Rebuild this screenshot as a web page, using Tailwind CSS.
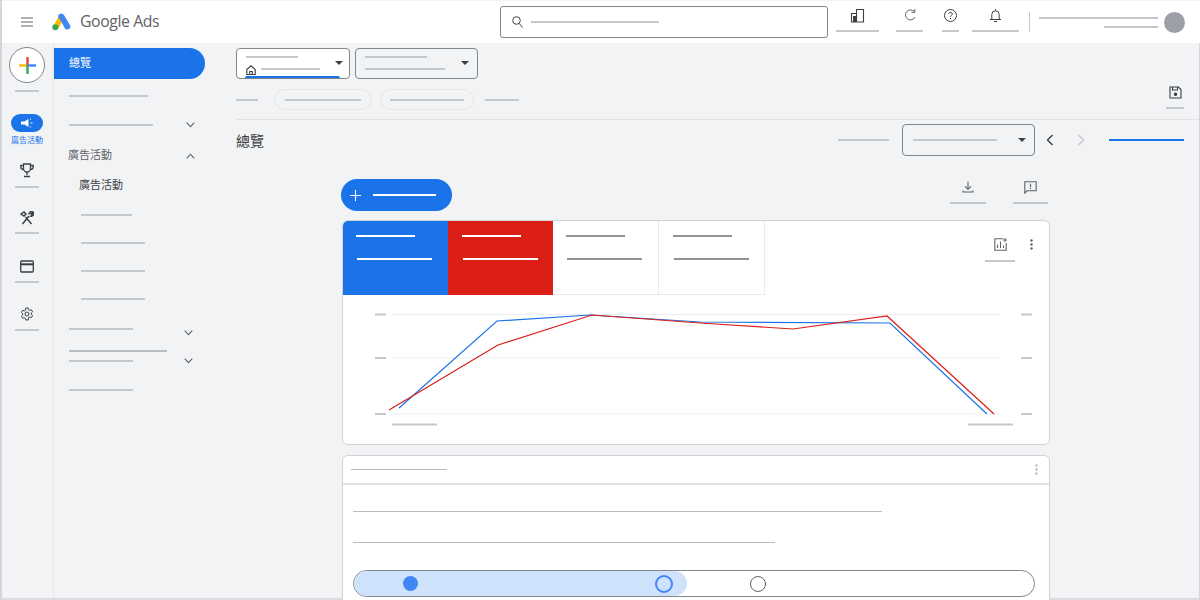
<!DOCTYPE html>
<html lang="zh-Hant">
<head>
    <meta charset="UTF-8">
    <title>Google Ads</title>
    <script src="https://cdn.jsdelivr.net/npm/@tailwindcss/browser@4"></script>
</head>
<body class="bg-[#f1f3f4] font-['Roboto','Noto_Sans_CJK_TC',sans-serif]">
<div class="relative w-[1200px] h-[600px] overflow-hidden flex flex-col">
    <!-- frame lines -->
    <div class="absolute left-0 right-0 top-[598px] h-[2px] bg-[#dadce0]"></div>
    <div class="absolute left-0 top-0 bottom-0 w-[2px] bg-[#d3d5d8] z-10"></div>
    <div class="absolute right-0 top-[43px] bottom-0 w-px bg-[#d3d5d8] z-10"></div>

    <!-- top bar -->
    <header class="h-[43px] shrink-0 bg-white border-t border-[#f1f3f4] flex items-center relative z-[1]">
        <svg class="ml-[21px] w-[12px] h-[10px]" viewBox="0 0 12 10"><path d="M0 1h12M0 5h12M0 9h12" stroke="#5f6368" stroke-width="1.1"/></svg>
        <svg class="ml-[19px] w-[20px] h-[18px]" viewBox="0 0 20 18">
            <path d="M7.4 2 1.6 12.6l5 2.6L12 5z" fill="#fbbc04"/>
            <path d="M10.6 1a3 3 0 0 0-4 1.1c-.8 1.4-.3 3.2 1.1 4l5 8.8a3 3 0 0 0 5.200-3L12 2a3 3 0 0 0-1.400-1z" fill="#4285f4"/>
            <circle cx="3.300" cy="14.300" r="3" fill="#34a853"/>
        </svg>
        <span class="ml-[8px] w-[80px] whitespace-nowrap text-[15.800px] text-[#5f6368] font-['Open_Sans',sans-serif] tracking-[-0.4px]">Google Ads</span>
        <div class="ml-[340px] w-[328px] h-[32px] rounded-[3px] border border-[#80868b] flex items-center pl-[11px]">
            <svg class="w-[11px] h-[12px]" viewBox="0 0 11 12" fill="none" stroke="#3c4043" stroke-width="1"><circle cx="4.500" cy="4.500" r="3.800"/><path d="M7.300 7.500 10.500 11.500"/></svg>
            <div class="ml-[8px] w-[128px] h-[2px] bg-[#c4c7cb]"></div>
        </div>
        <div class="ml-[8px] mb-[4px] w-[43px] flex flex-col items-center">
            <svg class="w-[15px] h-[15px]" viewBox="0 0 15 15" fill="none" stroke="#3c4043" stroke-width="1.100"><path d="M6.500 14V1.500h7V14zM1.500 14V5.500h5V14z"/><path d="M3 14V8h3.500v6z" fill="#3c4043" stroke="none"/></svg>
            <div class="mt-[7px] w-full h-[2px] bg-[#c4c7cb]"></div>
        </div>
        <div class="ml-[17px] mb-[4px] w-[27px] flex flex-col items-center">
            <svg class="w-[14px] h-[15px]" viewBox="0 0 14 15" fill="none" stroke="#5f6368" stroke-width="1"><path d="M11.500 4A5 5 0 1 0 12 9"/><path d="M8.500 4.300h3.300V1"/></svg>
            <div class="mt-[7px] w-full h-[2px] bg-[#c4c7cb]"></div>
        </div>
        <div class="ml-[19px] mb-[4px] w-[17px] flex flex-col items-center">
            <svg class="w-[15px] h-[15px]" viewBox="0 0 15 15" fill="none" stroke="#3c4043" stroke-width="1"><circle cx="7.500" cy="7.500" r="6"/><path d="M5.800 6a1.700 1.700 0 1 1 2.600 1.400c-.6.400-.9.700-.9 1.400"/><path d="M7.500 10v1"/></svg>
            <div class="mt-[7px] w-full h-[2px] bg-[#c4c7cb]"></div>
        </div>
        <div class="ml-[13px] mb-[4px] w-[47px] flex flex-col items-center">
            <svg class="w-[13px] h-[15px]" viewBox="0 0 13 15" fill="none" stroke="#3c4043" stroke-width="1"><path d="M1 11.500h11M2.800 11.500V6.500a3.700 3.700 0 0 1 7.400 0v5M5 13.500h3M6.500 1v1.500"/></svg>
            <div class="mt-[7px] w-full h-[2px] bg-[#c4c7cb]"></div>
        </div>
        <div class="ml-[10px] w-px h-[20px] bg-[#c4c7cb]"></div>
        <div class="ml-[9px] w-[119px] flex flex-col items-end gap-[7px]">
            <div class="w-full h-[2px] bg-[#c4c7cb]"></div>
            <div class="w-[54px] h-[2px] bg-[#c4c7cb]"></div>
        </div>
        <div class="ml-[6px] w-[21px] h-[21px] rounded-full bg-[#9aa0a6]"></div>
    </header>

    <div class="flex flex-1 min-h-0">
        <!-- icon rail -->
        <aside class="w-[54px] shrink-0 border-r border-[#e6e8ea] flex flex-col items-center pl-px">
            <div class="mt-[4px] w-[36px] h-[36px] rounded-full bg-white border border-[#80868b] flex items-center justify-center">
                <svg class="w-[17px] h-[17px]" viewBox="0 0 17 17"><path d="M0 8.500h8.500" stroke="#fbbc04" stroke-width="2.400"/><path d="M8.500 0v8.500" stroke="#ea4335" stroke-width="2.400"/><path d="M8.500 8.500V17" stroke="#34a853" stroke-width="2.400"/><path d="M8.500 8.500H17" stroke="#4285f4" stroke-width="2.400"/></svg>
            </div>
            <div class="mt-[7px] w-[24px] h-[2px] bg-[#c4c7cb]"></div>
            <div class="mt-[22px] w-[32px] h-[18px] rounded-full bg-[#1a73e8] flex items-center justify-center">
                <svg class="w-[14px] h-[11px]" viewBox="0 0 14 11" fill="none"><path d="M1 3.500h3.500L8.500 1v8L4.500 6.500H1z" fill="#fff"/><path d="M10 1.500 11 .8M10.500 5H12.500M10 8.500l1 .8" stroke="#fff" stroke-width="1"/></svg>
            </div>
            <div class="mt-[2px] text-[8px] leading-[13px] text-[#1a73e8]">廣告活動</div>
            <svg class="mt-[16px] w-[14px] h-[15px]" viewBox="0 0 14 15" fill="none" stroke="#3c4043" stroke-width="1.300"><path d="M3.500 1h7v4.500a3.500 3.500 0 0 1-7 0z"/><path d="M3.500 2.500H.8v1.300A2.700 2.700 0 0 0 3.500 6.500M10.500 2.500h2.700v1.300a2.700 2.700 0 0 1-2.700 2.700M7 9v3M4 13.500h6"/></svg>
            <div class="mt-[8px] w-[24px] h-[2px] bg-[#c4c7cb]"></div>
            <svg class="mt-[23px] w-[14px] h-[14px]" viewBox="0 0 14 14" fill="none" stroke="#3c4043" stroke-width="1.500"><path d="M2.500 13 9 5M1 3l3-2 2 2-2 2zM11.500 13 5.500 6M9 3.500A2.500 2.500 0 0 1 12.800 1L11 2.800l.7.800 1.800-1.500A2.500 2.500 0 0 1 10 5"/></svg>
            <div class="mt-[7px] w-[24px] h-[2px] bg-[#c4c7cb]"></div>
            <svg class="mt-[26px] w-[14px] h-[13px]" viewBox="0 0 14 13" fill="none" stroke="#3c4043" stroke-width="1.300"><rect x=".7" y="1" width="12.600" height="11" rx="1"/><path d="M.7 4.300h12.600" stroke-width="2"/></svg>
            <div class="mt-[8px] w-[24px] h-[2px] bg-[#c4c7cb]"></div>
            <svg class="mt-[24px] w-[14px] h-[14px]" viewBox="0 0 14 14" fill="none" stroke="#3c4043" stroke-width="1"><circle cx="7" cy="7" r="2"/><path d="M5.800 1h2.400l.4 1.700 1.100.6 1.700-.5 1.200 2-1.300 1.200v1.400l1.300 1.200-1.200 2-1.700-.5-1.100.6L8.200 13H5.800l-.4-1.700-1.100-.6-1.700.5-1.200-2 1.300-1.200V6.600L1.400 5.400l1.200-2 1.700.5 1.100-.6z"/></svg>
            <div class="mt-[8px] w-[24px] h-[2px] bg-[#c4c7cb]"></div>
        </aside>

        <!-- nav column -->
        <nav class="w-[152px] shrink-0 flex flex-col">
            <div class="mt-[5px] w-[151px] h-[31px] rounded-r-full bg-[#1a73e8] text-white text-[11px] flex items-center pl-[15px] pt-[2px]">總覽</div>
            <div class="mt-[16px] ml-[15px] w-[79px] h-[2px] bg-[#c4c7cb]"></div>
            <div class="mt-[22px] pl-[15px] pr-[11px] h-[12px] flex items-center justify-between">
                <div class="w-[84px] h-[2px] bg-[#c4c7cb]"></div>
                <svg class="w-[9px] h-[6px]" viewBox="0 0 9 6" fill="none" stroke="#5f6368" stroke-width="1.100"><path d="m.7.700 3.800 3.900L8.300.700"/></svg>
            </div>
            <div class="mt-[17px] pl-[14px] pr-[11px] h-[16px] flex items-center justify-between text-[11px] text-[#5f6368]">
                <span>廣告活動</span>
                <svg class="w-[9px] h-[6px]" viewBox="0 0 9 6" fill="none" stroke="#5f6368" stroke-width="1.100"><path d="m.7 5.300 3.800-3.900 3.800 3.900"/></svg>
            </div>
            <div class="mt-[14px] ml-[25px] h-[16px] leading-[16px] text-[11px] text-[#3c4043]">廣告活動</div>
            <div class="mt-[20px] ml-[27px] w-[51px] h-[2px] bg-[#c4c7cb]"></div>
            <div class="mt-[26px] ml-[27px] w-[64px] h-[2px] bg-[#c4c7cb]"></div>
            <div class="mt-[26px] ml-[27px] w-[64px] h-[2px] bg-[#c4c7cb]"></div>
            <div class="mt-[26px] ml-[27px] w-[64px] h-[2px] bg-[#c4c7cb]"></div>
            <div class="mt-[28px] pl-[15px] pr-[13px] flex items-start justify-between">
                <div class="w-[64px] h-[2px] bg-[#c4c7cb]"></div>
                <svg class="mt-[2px] w-[9px] h-[6px]" viewBox="0 0 9 6" fill="none" stroke="#5f6368" stroke-width="1.100"><path d="m.7.700 3.800 3.900L8.300.700"/></svg>
            </div>
            <div class="mt-[14px] pl-[15px] pr-[13px] flex items-end justify-between">
                <div class="flex flex-col gap-[8px]">
                    <div class="w-[98px] h-[2px] bg-[#b9bcc1]"></div>
                    <div class="w-[64px] h-[2px] bg-[#c4c7cb]"></div>
                </div>
                <svg class="-mb-[2px] w-[9px] h-[6px]" viewBox="0 0 9 6" fill="none" stroke="#5f6368" stroke-width="1.100"><path d="m.7.700 3.800 3.900L8.300.700"/></svg>
            </div>
            <div class="mt-[27px] ml-[15px] w-[64px] h-[2px] bg-[#c4c7cb]"></div>
        </nav>

        <!-- main -->
        <main class="relative flex-1 min-w-0 pl-[30px]">
            <div class="mt-[5px] flex gap-[5px]">
                <div class="relative w-[114px] h-[31px] rounded-[4px] bg-white border border-[#80868b] overflow-hidden">
                    <div class="absolute left-[9px] top-[7px] w-[52px] h-[2px] bg-[#c4c7cb]"></div>
                    <svg class="absolute left-[9px] top-[16px] w-[10px] h-[10px]" viewBox="0 0 10 10" fill="none" stroke="#3c4043" stroke-width="1.100"><path d="M.8 4.500 5 .8l4.200 3.700V9.500H.8zM3.700 9.500V6.500h2.600v3"/></svg>
                    <div class="absolute left-[24px] top-[19px] w-[59px] h-[2px] bg-[#c4c7cb]"></div>
                    <div class="absolute left-[98px] top-[12px] w-0 h-0 border-x-[4px] border-x-transparent border-t-[4px] border-t-[#3c4043]"></div>
                    <div class="absolute left-[8px] bottom-0 w-[95px] h-[2px] rounded-t-[2px] bg-[#1a73e8]"></div>
                </div>
                <div class="relative w-[123px] h-[31px] rounded-[4px] border border-[#80868b]">
                    <div class="absolute left-[9px] top-[7px] w-[62px] h-[2px] bg-[#c4c7cb]"></div>
                    <div class="absolute left-[9px] top-[19px] w-[80px] h-[2px] bg-[#c4c7cb]"></div>
                    <div class="absolute left-[105px] top-[12px] w-0 h-0 border-x-[4px] border-x-transparent border-t-[4px] border-t-[#3c4043]"></div>
                </div>
            </div>

            <div class="mt-[10px] h-[21px] flex items-center pr-[16px]">
                <div class="w-[22px] h-[2px] bg-[#c4c7cb]"></div>
                <div class="ml-[16px] w-[98px] h-[21px] rounded-full border border-[#e3e5e7] flex items-center justify-center"><div class="w-[76px] h-[2px] bg-[#c4c7cb]"></div></div>
                <div class="ml-[8px] w-[94px] h-[21px] rounded-full border border-[#e3e5e7] flex items-center justify-center"><div class="w-[74px] h-[2px] bg-[#c4c7cb]"></div></div>
                <div class="ml-[11px] w-[34px] h-[2px] bg-[#c4c7cb]"></div>
                <div class="ml-auto w-[18px] flex flex-col items-center">
                    <svg class="w-[13px] h-[13px] -mt-[4px]" viewBox="0 0 13 13" fill="none" stroke="#3c4043" stroke-width="1.100"><path d="M1 1h8.500L12 3.500V12H1zM3.500 1v3h5V1"/><circle cx="6.500" cy="8.300" r="1.200" fill="#3c4043"/></svg>
                    <div class="mt-[8px] w-full h-[2px] bg-[#c4c7cb]"></div>
                </div>
            </div>

            <div class="mt-[9px] h-px bg-[#e0e2e4]"></div>

            <div class="mt-[4px] h-[32px] flex items-center pr-[16px]">
                <h1 class="mt-[2px] text-[14px] text-[#3c4043]">總覽</h1>
                <div class="ml-auto w-[51px] h-[2px] bg-[#c4c7cb]"></div>
                <div class="relative ml-[13px] w-[133px] h-[32px] rounded-[4px] border border-[#80868b] flex items-center pl-[10px]">
                    <div class="w-[84px] h-[2px] bg-[#c4c7cb]"></div>
                    <div class="absolute left-[115px] top-[13px] w-0 h-0 border-x-[4px] border-x-transparent border-t-[4px] border-t-[#3c4043]"></div>
                </div>
                <svg class="ml-[11px] w-[8px] h-[12px]" viewBox="0 0 8 12" fill="none" stroke="#3c4043" stroke-width="1.400"><path d="M6.500 1 1.500 6l5 5"/></svg>
                <svg class="ml-[23px] w-[8px] h-[12px]" viewBox="0 0 8 12" fill="none" stroke="#c4c7cb" stroke-width="1.400"><path d="m1.500 1 5 5-5 5"/></svg>
                <div class="ml-[24px] w-[75px] h-[2px] bg-[#1a73e8]"></div>
            </div>

            <div class="ml-[106px] w-[708px]">
                <!-- actions -->
                <div class="pt-[23px] h-[55px] flex items-start">
                    <div class="-ml-px w-[111px] h-[32px] rounded-full bg-[#1a73e8] flex items-center pl-[9px]">
                        <svg class="w-[11px] h-[11px]" viewBox="0 0 11 11"><path d="M5.500 0v11M0 5.500h11" stroke="#fff" stroke-width="1.100"/></svg>
                        <div class="ml-[12px] w-[63px] h-[2px] bg-white"></div>
                    </div>
                    <div class="ml-[498px] mt-[2px] w-[36px] flex flex-col items-center">
                        <svg class="w-[12px] h-[12px]" viewBox="0 0 12 12" fill="none" stroke="#5f6368" stroke-width="1.100"><path d="M6 .5v7.500M3 5.300 6 8.300l3-3M1 9.500v1.500h10V9.500"/></svg>
                        <div class="mt-[9px] w-full h-[2px] bg-[#c4c7cb]"></div>
                    </div>
                    <div class="ml-[27px] mt-[2px] w-[35px] flex flex-col items-center">
                        <svg class="w-[13px] h-[13px]" viewBox="0 0 13 13" fill="none" stroke="#5f6368" stroke-width="1.100"><path d="M.8.800h11.400v9H3L.8 12.200zM6.500 2.800v3.500M6.500 7v1"/></svg>
                        <div class="mt-[8px] w-full h-[2px] bg-[#c4c7cb]"></div>
                    </div>
                </div>

                <!-- performance card -->
                <section class="mt-[9px] h-[225px] rounded-[6px] bg-white border border-[#d0d2d5] overflow-hidden">
                    <div class="relative flex h-[74px]">
                        <div class="w-[105px] bg-[#1a73e8] pt-[14px] pl-[13px]">
                            <div class="w-[59px] h-[2px] bg-white"></div>
                            <div class="mt-[21px] ml-px w-[75px] h-[2px] bg-white"></div>
                        </div>
                        <div class="w-[105px] bg-[#db1f17] pt-[14px] pl-[14px]">
                            <div class="w-[59px] h-[2px] bg-white"></div>
                            <div class="mt-[21px] ml-px w-[75px] h-[2px] bg-white"></div>
                        </div>
                        <div class="w-[106px] border-r border-b border-[#e8eaec] pt-[14px] pl-[13px]">
                            <div class="w-[59px] h-[2px] bg-[#8f9296]"></div>
                            <div class="mt-[21px] ml-px w-[75px] h-[2px] bg-[#8f9296]"></div>
                        </div>
                        <div class="w-[106px] border-r border-b border-[#e8eaec] pt-[14px] pl-[14px]">
                            <div class="w-[59px] h-[2px] bg-[#8f9296]"></div>
                            <div class="mt-[21px] ml-px w-[75px] h-[2px] bg-[#8f9296]"></div>
                        </div>
                        <div class="ml-[220px] mt-[17px] w-[30px] flex flex-col items-center">
                            <svg class="w-[13px] h-[13px]" viewBox="0 0 13 13" fill="none" stroke="#5f6368" stroke-width="1.100"><path d="M9 .8H.8v11.400h11.400V5M3.500 10V6.500M6.500 10V3.500M9.500 10V7.500"/><path d="M11 0v4M9 2h4" stroke-width="1"/></svg>
                            <div class="mt-[9px] w-full h-[2px] bg-[#c4c7cb]"></div>
                        </div>
                        <svg class="ml-[15px] mt-[18px] w-[3px] h-[11px]" viewBox="0 0 3 11" fill="#5f6368"><circle cx="1.500" cy="1.500" r="1.200"/><circle cx="1.500" cy="5.500" r="1.200"/><circle cx="1.500" cy="9.500" r="1.200"/></svg>
                    </div>
                    <!-- viewBox uses page coordinates so the points read like the screenshot -->
                    <svg class="block w-[706px] h-[149px]" viewBox="343 295 706 149" fill="none">
                        <path d="M392 314.500h608M392 358h608M392 414h608" stroke="#eceef0" stroke-width="1"/>
                        <path d="M375 314.500h11M375 358h11M375 414h11M1021 314.500h11M1021 358h11M1021 414h11" stroke="#c4c7cb" stroke-width="2"/>
                        <path d="M392 424.500h45M968 424.500h45" stroke="#c4c7cb" stroke-width="2"/>
                        <path d="M399 408 497 321 590 315 700 322 890 323 987 414" stroke="#1a73e8" stroke-width="1.200"/>
                        <path d="M389 410 498 345 592 315 700 323 793 329 887 316 994 414" stroke="#db1f17" stroke-width="1.200"/>
                    </svg>
                </section>

                <!-- second card -->
                <section class="mt-[10px] h-[150px] rounded-t-[6px] bg-white border border-[#d0d2d5] relative z-[1]">
                    <div class="h-[29px] border-b-2 border-[#dfe1e5] flex items-center justify-between pl-[8px] pr-[11px]">
                        <div class="w-[96px] h-px bg-[#b9bcc1]"></div>
                        <svg class="w-[3px] h-[11px]" viewBox="0 0 3 11" fill="#b9bcc1"><circle cx="1.500" cy="1.500" r="1.200"/><circle cx="1.500" cy="5.500" r="1.200"/><circle cx="1.500" cy="9.500" r="1.200"/></svg>
                    </div>
                    <div class="mt-[26px] ml-[10px] w-[529px] h-px bg-[#b9bcc1]"></div>
                    <div class="mt-[30px] ml-[10px] w-[422px] h-px bg-[#b9bcc1]"></div>
                    <div class="relative mt-[27px] ml-[10px] w-[682px] h-[27px] rounded-full border border-[#80868b] overflow-hidden">
                        <div class="absolute left-0 top-0 bottom-0 w-[333px] rounded-r-full bg-[#cfe2fb]"></div>
                        <div class="absolute left-[49px] top-[5px] w-[15px] h-[15px] rounded-full bg-[#4285f4]"></div>
                        <div class="absolute left-[301px] top-[4px] w-[18px] h-[18px] rounded-full border-2 border-[#4285f4]"></div>
                        <div class="absolute left-[396px] top-[5px] w-[16px] h-[16px] rounded-full bg-white border border-[#5f6368]"></div>
                    </div>
                </section>
            </div>
        </main>
    </div>
</div>
</body>
</html>
